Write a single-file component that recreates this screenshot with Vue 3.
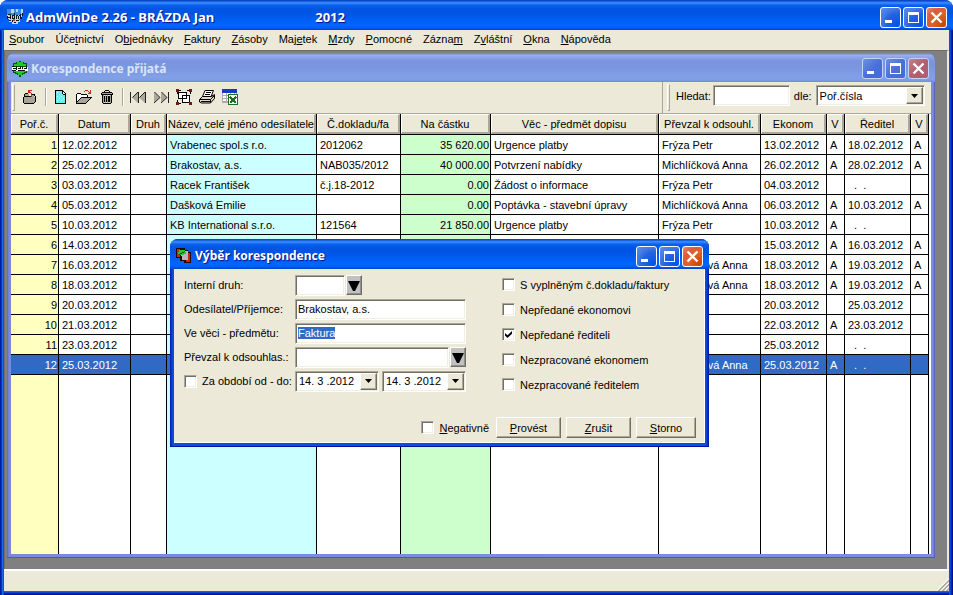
<script setup>
import { ref, onMounted } from 'vue'

const menu = [
  ['', 'S', 'oubor'],
  ['Úče', 't', 'nictví'],
  ['O', 'b', 'jednávky'],
  ['', 'F', 'aktury'],
  ['', 'Z', 'ásoby'],
  ['Maj', 'e', 'tek'],
  ['', 'M', 'zdy'],
  ['', 'P', 'omocné'],
  ['Zázna', 'm', ''],
  ['Z', 'v', 'láštní'],
  ['', 'O', 'kna'],
  ['', 'N', 'ápověda'],
]

const columns = [
  { key: 'no', label: 'Poř.č.' },
  { key: 'date', label: 'Datum' },
  { key: 'kind', label: 'Druh' },
  { key: 'name', label: 'Název, celé jméno odesílatele' },
  { key: 'doc', label: 'Č.dokladu/fa' },
  { key: 'amount', label: 'Na částku' },
  { key: 'subject', label: 'Věc - předmět dopisu' },
  { key: 'taken', label: 'Převzal k odsouhl.' },
  { key: 'econ', label: 'Ekonom' },
  { key: 'v1', label: 'V' },
  { key: 'dir', label: 'Ředitel' },
  { key: 'v2', label: 'V' },
]

const none = '\u00a0\u00a0.\u00a0\u00a0.'
const rows = [
  ['1', '12.02.2012', '', 'Vrabenec spol.s r.o.', '2012062', '35 620.00', 'Urgence platby', 'Frýza Petr', '13.02.2012', 'A', '18.02.2012', 'A'],
  ['2', '25.02.2012', '', 'Brakostav, a.s.', 'NAB035/2012', '40 000.00', 'Potvrzení nabídky', 'Michlíčková Anna', '26.02.2012', 'A', '28.02.2012', 'A'],
  ['3', '03.03.2012', '', 'Racek František', 'č.j.18-2012', '0.00', 'Žádost o informace', 'Frýza Petr', '04.03.2012', '', none, ''],
  ['4', '05.03.2012', '', 'Dašková Emilie', '', '0.00', 'Poptávka - stavební úpravy', 'Michlíčková Anna', '06.03.2012', 'A', '10.03.2012', 'A'],
  ['5', '10.03.2012', '', 'KB International s.r.o.', '121564', '21 850.00', 'Urgence platby', 'Frýza Petr', '10.03.2012', 'A', none, ''],
  ['6', '14.03.2012', '', '', '', '', '', '', '15.03.2012', 'A', '16.03.2012', 'A'],
  ['7', '16.03.2012', '', '', '', '', '', 'Michlíčková Anna', '18.03.2012', 'A', '19.03.2012', 'A'],
  ['8', '18.03.2012', '', '', '', '', '', 'Michlíčková Anna', '18.03.2012', 'A', '19.03.2012', 'A'],
  ['9', '20.03.2012', '', '', '', '', '', '', '20.03.2012', '', '25.03.2012', ''],
  ['10', '21.03.2012', '', '', '', '', '', '', '22.03.2012', 'A', '23.03.2012', ''],
  ['11', '23.03.2012', '', '', '', '', '', '', '25.03.2012', '', none, ''],
  ['12', '25.03.2012', '', '', '', '', '', 'Michlíčková Anna', '25.03.2012', 'A', none, ''],
]
const selected = ref(11)

const search = ref('')
const sortBy = ref('Poř.čísla')
const form = ref({ kind: '', sender: 'Brakostav, a.s.', subject: 'Faktura', taken: '', period: false, from: '14. 3 .2012', to: '14. 3 .2012', negative: false })
const filters = ref([
  { label: 'S vyplněným č.dokladu/faktury', on: false },
  { label: 'Nepředané ekonomovi', on: false },
  { label: 'Nepředané řediteli', on: true },
  { label: 'Nezpracované ekonomem', on: false },
  { label: 'Nezpracované ředitelem', on: false },
])

const subjectBox = ref(null)
onMounted(() => {
  subjectBox.value.focus()
  subjectBox.value.select()
})
</script>

<template>
  <div class="window main">
    <header class="titlebar">
      <svg class="app-icon" viewBox="0 0 16 16" shape-rendering="crispEdges" aria-hidden="true">
        <path fill="#3c8cd8" d="M0 0h16v6H0z" /><path fill="#a8dcf4" d="M4 0h3v4H4zM9 0h2v3H9zM14 0h2v5h-2z" />
        <path fill="#c8d4e0" d="M0 6h15v4H0zM2 10h11v3H2zM5 13h6v2H5z" />
        <path fill="#101820" d="M1 5h2v1H1zM0 7h1v3H0zM3 5h1v5H3zM1 8h2v1H1zM5 6h2v1H5zM5 7h1v3H5zM6 9h1v1H6zM7 4h1v6H7zM9 6h1v4H9zM10 6h1v1h-1zM11 7h1v3h-1zM12 6h1v1h-1zM13 5h1v5h-1zM14 8h1v2h-1zM15 4h1v3h-1zM2 11h2v1H2zM5 11h1v2H5zM9 11h3v1H9zM7 13h2v1H7z" />
        <path fill="#c84848" d="M6 10h2v2H6zM12 10h2v1h-2z" />
      </svg>
      <h1 class="title">AdmWinDe 2.26 - BRÁZDA Jan<span class="year">2012</span></h1>
      <div class="caption-buttons">
        <button type="button" aria-label="Minimalizovat"><svg viewBox="0 0 21 21"><path fill="#fff" d="M5 13h7v3H5z" /></svg></button>
        <button type="button" aria-label="Maximalizovat"><svg viewBox="0 0 21 21"><path fill="#fff" fill-rule="evenodd" d="M5 5h11v11H5zM6 8v7h9V8z" /></svg></button>
        <button type="button" class="close" aria-label="Zavřít"><svg viewBox="0 0 21 21"><path stroke="#fff" stroke-width="2.4" d="M5.500 5.500l10 10M15.500 5.500l-10 10" /></svg></button>
      </div>
    </header>

    <nav class="menu">
      <a v-for="m in menu" :key="m.join('')" href="#">{{ m[0] }}<u>{{ m[1] }}</u>{{ m[2] }}</a>
    </nav>

    <main class="workspace">
      <section class="window child">
        <header class="titlebar">
          <svg class="app-icon" viewBox="0 0 16 16" shape-rendering="crispEdges" aria-hidden="true">
            <path fill="#006000" d="M7 0h2v1H7zM4 1h8v1H4zM1 2h14v10H1zM3 12h10v1H3zM5 13h6v1H5zM7 14h2v2H7z" />
            <path fill="#20c830" d="M5 1h6v2H5zM2 3h12v2H2zM2 10h12v1H2zM4 11h8v1H4zM6 12h4v2H6z" />
            <path fill="#fff" d="M0 6h16v4H0z" />
            <path fill="#101010" d="M0 5h2v1H0zM1 7h3v1H1zM4 5h1v4H4zM6 7h2v1H6zM6 9h7v1H6zM8 5h1v3H8zM10 6h1v2h-1zM12 7h2v1h-2zM14 4h1v4h-1zM0 9h4v1H0z" />
          </svg>
          <h2 class="title">Korespondence přijatá</h2>
          <div class="caption-buttons">
            <button type="button" aria-label="Minimalizovat"><svg viewBox="0 0 21 21"><path fill="#fff" d="M5 13h7v3H5z" /></svg></button>
            <button type="button" aria-label="Maximalizovat"><svg viewBox="0 0 21 21"><path fill="#fff" fill-rule="evenodd" d="M5 5h11v11H5zM6 8v7h9V8z" /></svg></button>
            <button type="button" class="close" aria-label="Zavřít"><svg viewBox="0 0 21 21"><path stroke="#fff" stroke-width="2.4" d="M5.500 5.500l10 10M15.500 5.500l-10 10" /></svg></button>
          </div>
        </header>

        <div class="toolbar">
          <div class="tools">
            <i class="grip"></i>
            <button type="button" class="tool first" aria-label="Odejít">
              <svg viewBox="0 0 16 16" shape-rendering="crispEdges">
                <path fill="#000" d="M3 4h3v1H3zM2 5h1v2H2zM2 7h8v1H2zM1 8h1v5H1zM1 13h1v1H1zM2 14h10v1H2zM12 13h1v1h-1zM13 7h1v6h-1zM12 5h1v2h-1zM10 5h2v1h-2z" />
                <path fill="#a8a498" d="M3 5h4v2H3zM2 8h11v5H2zM2 13h10v1H2zM10 6h2v2h-2z" />
                <path fill="#d02818" d="M6 1h4v1H6zM6 2h2v2H6zM8 3h1v1H8zM9 4h1v4H9z" />
              </svg>
            </button>
            <i class="sep"></i>
            <button type="button" class="tool" aria-label="Nový">
              <svg viewBox="0 0 16 16" shape-rendering="crispEdges">
                <path fill="#000" d="M2 1h8v1H2zM2 2h1v13H2zM3 14h10v1H3zM12 5h1v9h-1zM9 2h1v3H9zM10 2h1v1h-1zM11 3h1v1h-1zM12 4h1v1h-1zM10 5h2v1h-2z" />
                <path fill="#70ecf0" d="M3 2h6v3h1v1h2v8H3z" /><path fill="#d8ffff" d="M4 3h1v1H4zM6 5h1v1H6zM4 7h1v1H4zM8 7h1v1H8zM6 9h1v1H6zM10 9h1v1h-1zM4 11h1v1H4zM8 11h1v1H8zM10 3h1v2h-1z" />
              </svg>
            </button>
            <button type="button" class="tool" aria-label="Otevřít">
              <svg viewBox="0 0 16 16" shape-rendering="crispEdges">
                <path fill="#000" d="M1 4h4v1H1zM5 5h6v1H5zM0 5h1v9H0zM11 6h1v2h-1zM5 8h11v1H5zM15 9h-1v1h1zM13 10h1v1h-1zM12 11h1v1h-1zM11 12h1v1h-1zM10 13h1v1h-1zM0 14h10v1H0zM4 9h1v1H4zM3 10h1v1H3zM2 11h1v1H2zM1 12h1v1H1z" />
                <path fill="#fff" d="M1 5h4v1h6v2H5v1H4v1H3v1H2v1H1z" /><path fill="#a8a498" d="M5 9h9v1h-1v1h-1v1h-1v1h-1v1H1v-1h1v-1h1v-1h1v-1h1z" />
                <path fill="#d02818" d="M9 1h3v1H9zM8 2h1v1H8zM12 2h1v1h-1zM13 3h2v1h-2zM14 1h1v3h-1zM12 4h3v1h-3z" />
              </svg>
            </button>
            <button type="button" class="tool" aria-label="Smazat">
              <svg viewBox="0 0 16 16" shape-rendering="crispEdges">
                <path fill="#000" d="M6 1h4v1H6zM5 2h1v1H5zM10 2h1v1h-1zM3 3h10v1H3zM2 4h1v2H2zM13 4h1v2h-1zM3 5h10v1H3zM3 6h1v8H3zM12 6h1v8h-1zM4 14h8v1H4zM5 7h1v6H5zM7 7h1v6H7zM9 7h1v6H9zM11 7h-1v6h1z" />
                <path fill="#a8a498" d="M3 4h10v1H3zM4 6h1v8H4zM6 6h1v8H6zM8 6h1v8H8zM11 6h1v8h-1z" />
              </svg>
            </button>
            <i class="sep"></i>
            <button type="button" class="tool" aria-label="První">
              <svg viewBox="0 0 16 16"><path fill="#aaa79b" d="M8 3v11L2 8.500zM15 3v11L9 8.500z" /><path fill="none" stroke="#222" d="M.500 3v11M8 3L2.500 8.500M15.500 3v11M15 3L9.500 8.500M8.500 3v11" /></svg>
            </button>
            <button type="button" class="tool" aria-label="Poslední">
              <svg viewBox="0 0 16 16"><path fill="#aaa79b" d="M1 3v11l6-5.500zM8 3v11l6-5.500z" /><path fill="none" stroke="#222" d="M15.500 3v11M1 14l6-5.500M8 14l6-5.500L8.500 3M1.500 3L7 8.500" /></svg>
            </button>
            <button type="button" class="tool" aria-label="Výběr">
              <svg viewBox="0 0 16 16" shape-rendering="crispEdges">
                <path fill="#fff" stroke="#000" d="M2.500 3.500h8v6h-8zM6.500 6.500h7v7h-7z" />
                <path fill="#000" d="M3 1h2v1H3zM11 1h2v1h-2zM1 3h1v2H1zM1 11h1v2H1zM3 14h2v1H3zM14 3h1v2h-1z" />
                <path fill="#701818" d="M0 0h3v3H0zM13 0h3v3h-3zM0 13h3v3H0zM13 13h3v3h-3z" />
              </svg>
            </button>
            <button type="button" class="tool" aria-label="Tisk">
              <svg viewBox="0 0 16 16">
                <path fill="#fff" stroke="#000" d="M6 1.500h8.500L12 7.500H3.500z" /><path stroke="#000" d="M7 3.500h5M6 5.500h5" />
                <path fill="#ddd9ca" stroke="#000" d="M.500 10.500l3-3h9l3-2v4l-4 4.500h-9l-2-1z" /><path fill="none" stroke="#000" d="M1 10.500h10.500l4-4M2 12.500h9.500M11.500 10.500v3M13 6.500l2 1" />
              </svg>
            </button>
            <button type="button" class="tool" aria-label="Export do tabulky">
              <svg viewBox="0 0 16 16" shape-rendering="crispEdges">
                <path fill="#fff" d="M0 0h15v14H0z" /><path fill="#1838c8" d="M0 0h15v4H0z" /><path fill="#a9a9b4" d="M0 4h1v10H0zM4 4h1v10H4zM8 4h1v3H8zM12 4h1v2h-1zM14 4h1v2h-1zM0 6h15v1H0zM0 9h6v1H0zM0 12h6v1H0zM0 13h6v1H0z" />
                <path fill="#fff" stroke="#187020" d="M6.500 5.500h9v10h-9z" /><path stroke="#187020" stroke-width="2" d="M8 8l6 6M14 8l-6 6" />
              </svg>
            </button>
          </div>
          <div class="search">
            <i class="grip"></i>
            <label for="search">Hledat:</label>
            <input id="search" v-model="search" class="sunken search-box" type="text">
            <label for="sort">dle:</label>
            <div class="combo sunken">
              <select id="sort" v-model="sortBy"><option>Poř.čísla</option></select>
              <span class="drop"><svg viewBox="0 0 7 4"><path d="M0 0h7L3.500 4z" /></svg></span>
            </div>
          </div>
        </div>

        <div class="grid">
          <table>
            <colgroup><col v-for="c in columns" :key="c.key" :class="'w-' + c.key"></colgroup>
            <thead>
              <tr><th v-for="c in columns" :key="c.key" scope="col"><span>{{ c.label }}</span></th></tr>
            </thead>
            <tbody>
              <tr v-for="(r, i) in rows" :key="i" class="record" :class="{ selected: i === selected }" @click="selected = i">
                <td v-for="(v, j) in r" :key="j" :class="'c-' + columns[j].key">{{ v }}</td>
              </tr>
              <tr class="rest"><td v-for="c in columns" :key="c.key" :class="'c-' + c.key"></td></tr>
            </tbody>
          </table>
        </div>
      </section>
    </main>

    <footer class="status">
      <svg viewBox="0 0 12 12" aria-hidden="true"><path stroke="#fff" stroke-width="1.500" d="M0 12L12 0M4 12l8-8M8 12l4-4" /><path stroke="#a5a292" stroke-width="1.500" d="M1 12.500L12.500 1M5 12.500L12.500 5M9 12.500l3.500-3.500" /></svg>
    </footer>

    <form class="window dialog" role="dialog" aria-labelledby="dialog-title" @submit.prevent>
      <header class="titlebar">
        <svg class="app-icon" viewBox="0 0 16 16" shape-rendering="crispEdges" aria-hidden="true">
          <path fill="#200808" d="M0 0h9v10H0zM4 2h8v11H4zM8 4h7v11H8z" />
          <path fill="#d02020" d="M1 1h3v8H1zM10 5h4v9h-4z" />
          <path fill="#b8b8b8" d="M5 3h7v9H6z" /><path fill="#20c838" d="M3 2h6v2h1v2H8v1H3V6H2V4h1z" /><path fill="#085818" d="M3 6h1V5h2V4h2V3h1v1H8v1H6v1H4v1H3z" />
        </svg>
        <h2 id="dialog-title" class="title">Výběr korespondence</h2>
        <div class="caption-buttons">
          <button type="button" aria-label="Minimalizovat"><svg viewBox="0 0 21 21"><path fill="#fff" d="M5 13h7v3H5z" /></svg></button>
          <button type="button" aria-label="Maximalizovat"><svg viewBox="0 0 21 21"><path fill="#fff" fill-rule="evenodd" d="M5 5h11v11H5zM6 8v7h9V8z" /></svg></button>
          <button type="button" class="close" aria-label="Zavřít"><svg viewBox="0 0 21 21"><path stroke="#fff" stroke-width="2.4" d="M5.500 5.500l10 10M15.500 5.500l-10 10" /></svg></button>
        </div>
      </header>
      <div class="dialog-body">
        <div class="columns">
          <div class="fields">
            <label for="kind">Interní druh:</label>
            <div class="field"><input id="kind" v-model="form.kind" class="sunken short" type="text"><button type="button" class="lookup" aria-label="Vybrat druh"><svg viewBox="0 0 12 10"><path d="M0 0h12L7 10H5z" /></svg></button></div>
            <label for="sender">Odesílatel/Příjemce:</label>
            <div class="field"><input id="sender" v-model="form.sender" class="sunken" type="text"></div>
            <label for="subject">Ve věci - předmětu:</label>
            <div class="field"><input id="subject" ref="subjectBox" v-model="form.subject" class="sunken" type="text"></div>
            <label for="taken">Převzal k odsouhlas.:</label>
            <div class="field"><input id="taken" v-model="form.taken" class="sunken" type="text"><button type="button" class="lookup" aria-label="Vybrat osobu"><svg viewBox="0 0 12 10"><path d="M0 0h12L7 10H5z" /></svg></button></div>
            <label class="check"><input v-model="form.period" type="checkbox">Za období od - do:</label>
            <div class="field dates">
              <div class="combo sunken"><input v-model="form.from" type="text" aria-label="Od"><button type="button" class="drop" aria-label="Kalendář od"><svg viewBox="0 0 7 4"><path d="M0 0h7L3.500 4z" /></svg></button></div>
              <div class="combo sunken"><input v-model="form.to" type="text" aria-label="Do"><button type="button" class="drop" aria-label="Kalendář do"><svg viewBox="0 0 7 4"><path d="M0 0h7L3.500 4z" /></svg></button></div>
            </div>
          </div>
          <div class="filters">
            <label v-for="f in filters" :key="f.label" class="check"><input v-model="f.on" type="checkbox">{{ f.label }}</label>
          </div>
        </div>
        <div class="actions">
          <label class="check"><input v-model="form.negative" type="checkbox"><span><u>N</u>egativně</span></label>
          <button type="submit" class="push"><u>P</u>rovést</button>
          <button type="reset" class="push"><u>Z</u>rušit</button>
          <button type="button" class="push small"><u>S</u>torno</button>
        </div>
      </div>
    </form>
  </div>
</template>

<style>
body { background: #fff; }
</style>

<style scoped>
* { box-sizing: border-box; }
.window, button, input, select { font: 11px/14px "Liberation Sans", Arial, sans-serif; color: #000; }
.window { display: flex; flex-direction: column; border-radius: 8px 8px 0 0; }
button, input, select { margin: 0; padding: 0; border: 0; border-radius: 0; outline: 0; }
svg { display: block; }

.main { position: relative; min-height: 100vh; padding: 0 4px 4px; background: linear-gradient(90deg, #001ea0 0 1px, #0831d9 1px 2px, #166aee 2px 3px, #0855dd 3px 4px, transparent 4px calc(100% - 4px), #0855dd calc(100% - 4px) calc(100% - 3px), #0847d4 calc(100% - 3px) calc(100% - 2px), #0025b4 calc(100% - 2px) calc(100% - 1px), #00138c calc(100% - 1px)), linear-gradient(0deg, #00138c 0 1px, #0025b4 1px 2px, #0847d4 2px 3px, #1c5fd8 3px); }

.titlebar { display: flex; align-items: center; flex: none; height: 30px; margin: 0 -4px; padding: 4px 6px 0 7px; border-radius: 8px 8px 0 0; background: linear-gradient(#0a48c8 0 1px, #2a7ef4 2px, #3c8cff 3px, #0a62ee 5px, #0054e0 9px, #0055e4 14px, #0062fa 22px, #0066ff 26px, #005bf0 28px, #0043cc 30px); }
.app-icon { flex: none; width: 16px; height: 16px; }
.title { flex: 1; margin: 0 0 0 3px; font: bold 12px/18px "Noto Sans", "Open Sans", sans-serif; color: #fff; text-shadow: 1px 1px 1px #0f1089; white-space: nowrap; }
h1.title { font-size: 13px; }
.year { margin-left: 101px; }
.caption-buttons { display: flex; gap: 2px; }
.caption-buttons button { width: 21px; height: 21px; border: 1px solid #fff; border-radius: 3px; background: radial-gradient(circle at 90% 90%, #0054e9 0, #2663e0 50%, #4479e4 70%, #5d8df0 100%); }
.caption-buttons button.close { background: radial-gradient(circle at 90% 90%, #cc4600 0, #dc6527 50%, #dd5a3c 70%, #e88a70 100%); }
.caption-buttons svg { width: 21px; height: 21px; margin: -1px; }

.menu { display: flex; gap: 11px; flex: none; height: 20px; padding: 2px 5px; background: #ece9d8; }
.menu a { color: #000; text-decoration: none; }

.workspace { flex: 1; display: flex; padding: 2px 12px 11px 2px; background: #808080; border: solid #716f64; border-width: 1px 0 0 1px; border-right: 2px solid #ece9d8; }
.status { display: flex; align-items: flex-end; justify-content: flex-end; flex: none; height: 22px; border-top: 2px solid #fff; background: #ece9d8; }
.status svg { width: 12px; height: 12px; }

.child { flex: 1; min-width: 0; padding: 0 4px 4px; background: linear-gradient(90deg, #5a64c4 0, #7a88de 2px, #7e8ce0 calc(100% - 2px), #5058b0 100%); box-shadow: inset 0 -1px #5058b0; }
.child .titlebar { height: 29px; padding: 2px 6px 0 5px; background: linear-gradient(#7688d0 0 1px, #9cb0f0 2px, #8ea4ea 4px, #7a94e0 8px, #7b97e1 16px, #82a0e8 24px, #809ee6 27px, #7488d8 29px); }
.child .title { color: #d8e4f8; text-shadow: none; }
.child .caption-buttons button { border-color: #c8d2f4; background: linear-gradient(135deg, #7090e4, #4a70dc 50%, #4468dc); }
.child .caption-buttons button.close { background: linear-gradient(135deg, #c4808c, #b0606c 50%, #a86078); }

.toolbar { display: flex; height: 32px; flex: none; background: #ece9d8; border-bottom: 1px solid #aca899; }
.tools { flex: 1; display: flex; align-items: center; padding: 0 0 2px 1px; border-right: 1px solid #aca899; }
.grip { flex: none; align-self: stretch; width: 3px; margin-top: 2px; border: 1px solid #aca899; border-left-color: #fff; border-top-color: #fff; }
.tool { width: 23px; height: 20px; padding: 2px 4px 2px 3px; background: transparent; }
.tool.first { margin-left: 4px; }
.tool svg { width: 16px; height: 16px; }
.sep { width: 2px; height: 18px; margin: 0 3px; border-left: 1px solid #aca899; border-right: 1px solid #fff; }
.search { display: flex; align-items: center; gap: 2px; width: 268px; padding: 0 6px 4px 4px; }
.search .grip { margin-bottom: -2px; margin-right: 4px; }
.search-box { width: 77px; }
.search-box + label { margin-left: 2px; }
.search .combo { flex: 1; margin-left: 2px; }

.sunken { height: 21px; min-width: 0; padding: 1px 2px; background: #fff; border: 1px solid; border-color: #aca899 #fff #fff #aca899; box-shadow: inset 1px 1px #716f64, inset -1px -1px #f1efe2; }
.combo { display: grid; grid-template-columns: minmax(0, 1fr) 17px; padding: 1px; }
.combo select, .combo input { grid-area: 1 / 1 / 2 / 3; min-width: 0; width: 100%; padding: 0 2px; appearance: none; background: transparent; }
.drop { grid-area: 1 / 2; display: flex; align-items: center; justify-content: center; margin: 0; background: #ece9d8; border: 1px solid; border-color: #fff #716f64 #716f64 #fff; box-shadow: inset -1px -1px #aca899; pointer-events: none; }
.drop svg { width: 7px; height: 4px; }

.grid { flex: 1; display: flex; padding-right: 2px; background: #fff; }
table { flex: 1; width: 100%; table-layout: fixed; border-collapse: separate; border-spacing: 0; }
.w-no { width: 48px; }
.w-date { width: 72px; }
.w-kind { width: 36px; }
.w-name { width: 150px; }
.w-doc { width: 84px; }
.w-amount { width: 90px; }
.w-taken { width: 102px; }
.w-econ, .w-dir { width: 66px; }
.w-v1, .w-v2 { width: 18px; }
th, td { padding: 0; border-right: 1px solid #000; white-space: nowrap; overflow: hidden; }
th { height: 21px; font-weight: normal; background: #ece9d8; border-bottom: 1px solid #000; }
th span { display: block; height: 20px; overflow: hidden; line-height: 18px; text-align: center; border: solid; border-width: 1px 2px 2px 1px; border-color: #fff #aca899 #aca899 #fff; }
td { background: #fff; }
.record td { height: 20px; padding: 0 1px 0 3px; border-bottom: 1px solid #000; }
.record .c-no, .record .c-amount { padding-right: 1px; text-align: right; }
td.c-no { background: #ffffc0; }
td.c-name { background: #ccffff; }
td.c-amount { background: #ccffcc; }
.selected td.c-no, .selected td { background: #316ac5; color: #fff; }
.selected td.c-name, .selected td.c-amount { background: #316ac5; }

.dialog { position: absolute; left: 170px; top: 239px; width: 539px; padding: 0 4px 4px; background: linear-gradient(90deg, #0020b0, #0a50dc 3px, #0a50dc calc(100% - 3px), #00149c); box-shadow: inset 0 -1px #00149c; }
.dialog .titlebar { padding: 4px 6px 0 6px; }
.dialog-body { padding: 4px 8px 4px 10px; background: #ece9d8; border: solid #fff; border-width: 0 1px 1px 0; }
.columns { display: flex; gap: 36px; }
.fields { display: grid; grid-template-columns: 111px 171px; grid-auto-rows: 24px; align-items: center; }
.field { display: flex; gap: 1px; }
.field > .sunken { flex: 1; }
.field > .short { flex: none; width: 50px; }
.field input::selection { background: #316ac5; color: #fff; }
.dates { gap: 3px; }
.lookup { width: 16px; height: 20px; padding: 2px 1px 0; background: #c0c0c0; border: 1px solid; border-color: #fff #716f64 #716f64 #fff; box-shadow: inset -1px -1px #909090; }
.lookup svg { width: 12px; height: 10px; }
.filters { display: grid; grid-auto-rows: 25px; align-content: start; align-items: center; margin: -1px 0; }
.check { display: flex; align-items: center; gap: 5px; white-space: nowrap; }
.check input { appearance: none; display: grid; place-items: center; width: 13px; height: 13px; background: #fff; border: 1px solid; border-color: #aca899 #fff #fff #aca899; box-shadow: inset 1px 1px #716f64, inset -1px -1px #f1efe2; }
.check input:checked::after { content: ""; width: 7px; height: 7px; background: #000; clip-path: polygon(0 28%, 35% 62%, 100% 0, 100% 40%, 35% 100%, 0 65%); }
.actions { display: flex; justify-content: flex-end; gap: 5px; margin-top: 21px; }
.actions .check { margin-right: 2px; }
.push { width: 65px; height: 21px; background: #ece9d8; border: 1px solid; border-color: #fff #716f64 #716f64 #fff; box-shadow: inset -1px -1px #aca899; }
.push.small { width: 60px; }
</style>
